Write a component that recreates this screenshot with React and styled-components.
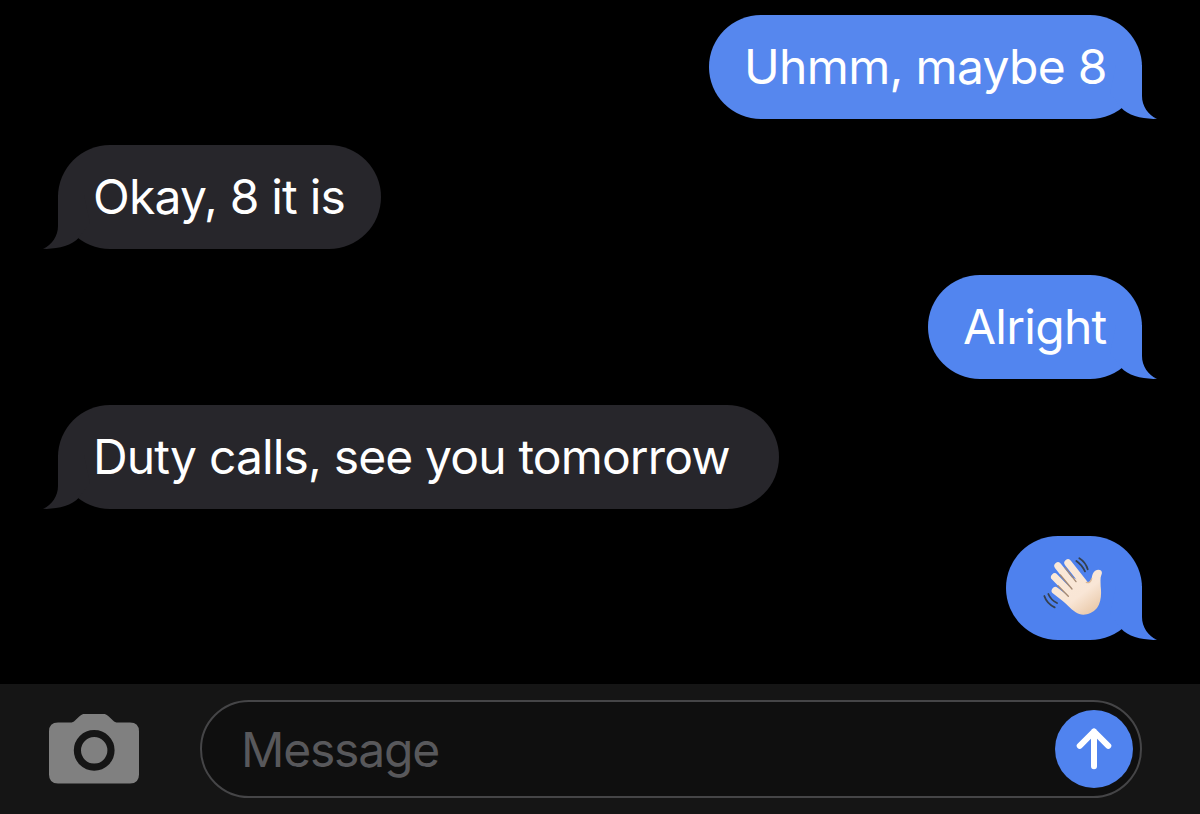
import styled, { createGlobalStyle } from "styled-components";

const GlobalStyle = createGlobalStyle`
  * {
    box-sizing: border-box;
  }
  body {
    margin: 0;
    background-color: #000;
    font-family: Inter, "Liberation Sans", sans-serif;
  }
`;

const StyledScreen = styled.div`
  width: 1200px;
  height: 814px;
  display: flex;
  flex-direction: column;
  background-color: #000;
  overflow: hidden;
`;

const StyledThread = styled.main`
  flex: 1;
  display: flex;
  flex-direction: column;
  gap: 26.3px;
  padding: 14.6px 58px 0;
`;

const StyledBubble = styled.div`
  position: relative;
  display: flex;
  align-items: center;
  align-self: ${(props) => (props.$sent ? "flex-end" : "flex-start")};
  width: ${(props) => props.$width}px;
  height: 104px;
  padding: 0 35px;
  border-radius: 52px;
  color: #fff;
  background-color: ${(props) => props.$color};
`;

const StyledText = styled.span`
  position: relative;
  font-size: 48px;
  line-height: 58px;
  white-space: pre;
  letter-spacing: ${(props) => props.$spacing}px;
`;

/* hangs over the bottom corner, mirrored for received messages */
const StyledTail = styled.svg`
  position: absolute;
  bottom: 0;
  width: 67px;
  height: 54px;
  ${(props) => (props.$sent ? "right: -15px;" : "left: -15px;")}
  transform: ${(props) => (props.$sent ? "none" : "scaleX(-1)")};
`;

const StyledWave = styled.svg`
  position: relative;
  width: 60px;
  height: 60px;
  margin: -3px 0 0 2px;
  flex-shrink: 0;
`;

const StyledBar = styled.footer`
  height: 130px;
  display: flex;
  align-items: flex-start;
  padding: 16px 58px 0 49px;
  background-color: #151515;
`;

const StyledCameraButton = styled.button`
  width: 90px;
  height: 70px;
  margin: 14px 61px 0 0;
  padding: 0;
  border: none;
  background: none;
`;

const StyledField = styled.div`
  flex: 1;
  height: 98px;
  display: flex;
  align-items: center;
  justify-content: space-between;
  padding: 0 7px 0 39px;
  border: 2px solid #454547;
  border-radius: 49px;
  background-color: #0f0f0f;
`;

const StyledPlaceholder = styled.span`
  padding-top: 2px;
  color: #58585b;
  font-size: 48px;
  line-height: 58px;
  letter-spacing: -1.2px;
`;

const StyledSend = styled.button`
  width: 78px;
  height: 78px;
  padding: 0;
  border: none;
  border-radius: 50%;
  background-color: #5083ef;
`;

const messages = [
  { text: "Uhmm, maybe 8", sent: true, width: 433, color: "#5687ee", spacing: -0.67 },
  { text: "Okay, 8 it is", sent: false, width: 322.5, color: "#27262b", spacing: -0.8 },
  { text: "Alright", sent: true, width: 214, color: "#5285ef", spacing: -0.75 },
  { text: "Duty calls, see you tomorrow", sent: false, width: 721, color: "#27262b", spacing: -0.85 },
  { wave: true, sent: true, width: 136, color: "#4e81ee" },
];

function Tail({ sent, color }) {
  return (
    <StyledTail $sent={sent} viewBox="0 0 67 54" aria-hidden="true">
      <path
        d="M26 0H52V31C52 41 58 50 67 53.8C53 54.5 38.500 51 31 42.600L20 28Z"
        fill={color}
      />
    </StyledTail>
  );
}

function Wave() {
  return (
    <StyledWave viewBox="40 34 180 180" role="img" aria-label="Waving hand">
      <defs>
        <linearGradient id="skin" x1="70" y1="50" x2="190" y2="210" gradientUnits="userSpaceOnUse">
          <stop offset="0" stopColor="#fbe9d8" />
          <stop offset="0.65" stopColor="#f9e6d6" />
          <stop offset="1" stopColor="#e8c7a6" />
        </linearGradient>
      </defs>
      <g fill="none" stroke="url(#skin)" strokeWidth="22" strokeLinecap="round">
        <path d="M115 55L170 125" />
        <path d="M85 64L145 140" />
        <path d="M75 97L132 155" />
        <path d="M77 138L125 175" />
      </g>
      <path
        d="M126 98L160 111C174 119 183 112 186 101C188 87 194 75 206 75C216 75 219 82 215 91C211 101 213 113 213 125C216 150 214 174 202 190C184 211 156 216 138 203C122 192 105 174 94 160L112 153Z"
        fill="url(#skin)"
      />
      <g fill="none" stroke="#a58a74" strokeWidth="4" strokeLinecap="round">
        <path d="M106 69L139 111" />
        <path d="M92 91L127 133" />
        <path d="M85 123L116 155" />
        <path d="M186 102C184 112 177 116 170 113" stroke="#dbb896" />
      </g>
      <g fill="none" stroke="#35404f" strokeWidth="5.500" strokeLinecap="round">
        <path d="M149 41C160 48 170 60 174 74" />
        <path d="M140 49C152 57 160 68 166 80" />
        <path d="M56 148C61 160 70 169 82 175" />
        <path d="M44 154C49 169 60 181 75 188" />
      </g>
    </StyledWave>
  );
}

function Message({ text, wave, sent, width, color, spacing }) {
  return (
    <StyledBubble $sent={sent} $width={width} $color={color}>
      <Tail sent={sent} color={color} />
      {wave ? <Wave /> : <StyledText $spacing={spacing}>{text}</StyledText>}
    </StyledBubble>
  );
}

function CameraIcon() {
  return (
    <svg width="90" height="70" viewBox="0 0 90 70" aria-hidden="true">
      <path
        d="M9 8.500H21C23.500 8.500 24.500 8 26 6.500L30.500 2.300C32.500 .6 33.500 0 36 0H54C56.500 0 57.500 .6 59.500 2.300L64 6.500C65.500 8 66.500 8.500 69 8.500H81Q90 8.500 90 17.500V60.500Q90 69.500 81 69.500H9Q0 69.500 0 60.500V17.500Q0 8.500 9 8.500Z"
        fill="#808080"
      />
      <circle cx="45.200" cy="36.300" r="16.800" fill="#808080" stroke="#151515" strokeWidth="7.200" />
    </svg>
  );
}

function SendIcon() {
  return (
    <svg width="78" height="78" viewBox="0 0 78 78" aria-hidden="true">
      <path
        d="M39 56.300V21.500M24.700 35.800L39 21.500L53.300 35.800"
        fill="none"
        stroke="#fff"
        strokeWidth="6"
        strokeLinecap="round"
        strokeLinejoin="round"
      />
    </svg>
  );
}

function App() {
  return (
    <>
      <GlobalStyle />
      <StyledScreen>
        <StyledThread>
          {messages.map((message, index) => (
            <Message key={index} {...message} />
          ))}
        </StyledThread>
        <StyledBar>
          <StyledCameraButton aria-label="Camera">
            <CameraIcon />
          </StyledCameraButton>
          <StyledField>
            <StyledPlaceholder>Message</StyledPlaceholder>
            <StyledSend aria-label="Send">
              <SendIcon />
            </StyledSend>
          </StyledField>
        </StyledBar>
      </StyledScreen>
    </>
  );
}

export default App;
